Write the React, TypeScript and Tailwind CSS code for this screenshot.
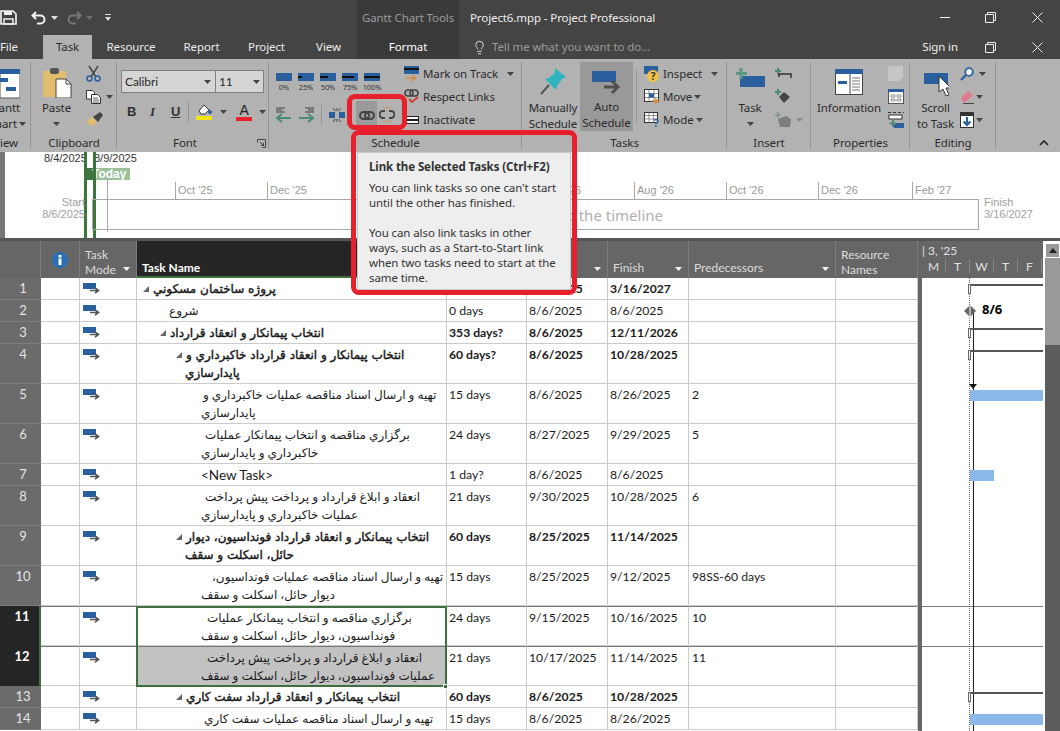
import React from "react";
import { Lightbulb } from "lucide-react";

const BLUE = "#2a5f9e";

function Caret({ c = "#444", cls = "" }: { c?: string; cls?: string }) {
  return (
    <svg width="7" height="4" viewBox="0 0 7 4" className={cls}>
      <polygon points="0,0 7,0 3.5,4" fill={c} />
    </svg>
  );
}

function AutoIcon() {
  return (
    <svg width="17" height="11" viewBox="0 0 17 11">
      <rect x="0" y="0" width="13" height="6" fill={BLUE} />
      <path d="M7 7.5h8M12 4.8l3.5 2.7L12 10.2" stroke="#555" strokeWidth="1.7" fill="none" />
    </svg>
  );
}

function Pct({ w, label }: { w: number; label: string }) {
  return (
    <div className="flex flex-col items-center w-[16px]">
      <svg width="16" height="8" viewBox="0 0 16 8">
        <rect width="16" height="8" fill={BLUE} />
        <rect y="3" width={w} height="2" fill="#111" />
      </svg>
      <span className="text-[7.5px] leading-[10px] mt-[1px] text-[#333] whitespace-nowrap">{label}</span>
    </div>
  );
}

function BigBtn({ icon, lines, caret, cls = "" }: { icon: React.ReactNode; lines: string[]; caret?: boolean; cls?: string }) {
  return (
    <div className={`flex flex-col items-center ${cls}`}>
      <div className="h-[41px] flex items-center justify-center">{icon}</div>
      {lines.map((l) => (
        <div key={l} className="h-[16px] leading-[16px] whitespace-nowrap">{l}</div>
      ))}
      {caret && <div className="h-[16px] flex items-center"><Caret /></div>}
    </div>
  );
}

function Group({ label, w, children, lblCls = "" }: { label: string; w: string; children: React.ReactNode; lblCls?: string }) {
  return (
    <div className={`relative shrink-0 flex flex-col ${w}`}>
      <div className="h-[75px] flex overflow-hidden">{children}</div>
      <div className={`h-[18px] leading-[18px] text-center whitespace-nowrap overflow-hidden ${lblCls}`}>{label}</div>
      <div className="absolute right-0 top-[3px] bottom-[3px] w-px bg-[#959595]" />
    </div>
  );
}

function Stack({ children, cls = "" }: { children: React.ReactNode; cls?: string }) {
  return <div className={`flex flex-col pt-[3px] ${cls}`}>{children}</div>;
}

function SRow({ children, cls = "" }: { children: React.ReactNode; cls?: string }) {
  return <div className={`h-[23px] flex items-center whitespace-nowrap ${cls}`}>{children}</div>;
}

type Line = { t: string; m: string };
type Row = { n: number; lines: Line[]; arrow?: string; bold?: boolean; dur: string; st: string; fin: string; pred?: string; dark?: boolean; sel?: boolean; h: string };

const rows: Row[] = [
  { n: 1, h: "h-[22px]", bold: true, arrow: "ml-[6px]", lines: [{ t: "پروژه ساختمان مسکوني", m: "" }], dur: "585 days?", st: "8/6/2025", fin: "3/16/2027" },
  { n: 2, h: "h-[22px]", lines: [{ t: "شروع", m: "ml-[32px]" }], dur: "0 days", st: "8/6/2025", fin: "8/6/2025" },
  { n: 3, h: "h-[22px]", bold: true, arrow: "ml-[23px]", lines: [{ t: "انتخاب پيمانکار و انعقاد قرارداد", m: "" }], dur: "353 days?", st: "8/6/2025", fin: "12/11/2026" },
  { n: 4, h: "h-[40px]", bold: true, arrow: "ml-[39px]", lines: [{ t: "انتخاب پيمانکار و انعقاد قرارداد خاکبرداري و", m: "" }, { t: "پايدارسازي", m: "ml-[48px]" }], dur: "60 days?", st: "8/6/2025", fin: "10/28/2025" },
  { n: 5, h: "h-[40px]", lines: [{ t: "تهيه و ارسال اسناد مناقصه عمليات خاکبرداري و", m: "ml-[66px]" }, { t: "پايدارسازي", m: "ml-[64px]" }], dur: "15 days", st: "8/6/2025", fin: "8/26/2025", pred: "2" },
  { n: 6, h: "h-[40px]", lines: [{ t: "برگزاري مناقصه و انتخاب پيمانکار عمليات", m: "ml-[68px]" }, { t: "خاکبرداري و پايدارسازي", m: "ml-[64px]" }], dur: "24 days", st: "8/27/2025", fin: "9/29/2025", pred: "5" },
  { n: 7, h: "h-[22px]", lines: [{ t: "<New Task>", m: "ml-[64px]" }], dur: "1 day?", st: "8/6/2025", fin: "8/6/2025" },
  { n: 8, h: "h-[40px]", lines: [{ t: "انعقاد و ابلاغ قرارداد و پرداخت پيش پرداخت", m: "ml-[68px]" }, { t: "عمليات خاکبرداري و پايدارسازي", m: "ml-[64px]" }], dur: "21 days", st: "9/30/2025", fin: "10/28/2025", pred: "6" },
  { n: 9, h: "h-[40px]", bold: true, arrow: "ml-[39px]", lines: [{ t: "انتخاب پيمانکار و انعقاد قرارداد فونداسيون، ديوار", m: "" }, { t: "حائل، اسکلت و سقف", m: "ml-[48px]" }], dur: "60 days", st: "8/25/2025", fin: "11/14/2025" },
  { n: 10, h: "h-[40px]", lines: [{ t: "تهيه و ارسال اسناد مناقصه عمليات فونداسيون،", m: "ml-[75px]" }, { t: "ديوار حائل، اسکلت و سقف", m: "ml-[64px]" }], dur: "15 days", st: "8/25/2025", fin: "9/12/2025", pred: "98SS-60 days" },
  { n: 11, h: "h-[40px]", dark: true, lines: [{ t: "برگزاري مناقصه و انتخاب پيمانکار عمليات", m: "ml-[70px]" }, { t: "فونداسيون، ديوار حائل، اسکلت و سقف", m: "ml-[64px]" }], dur: "24 days", st: "9/15/2025", fin: "10/16/2025", pred: "10" },
  { n: 12, h: "h-[40px]", dark: true, sel: true, lines: [{ t: "انعقاد و ابلاغ قرارداد و پرداخت پيش پرداخت", m: "ml-[70px]" }, { t: "عمليات فونداسيون، ديوار حائل، اسکلت و سقف", m: "ml-[64px]" }], dur: "21 days", st: "10/17/2025", fin: "11/14/2025", pred: "11" },
  { n: 13, h: "h-[22px]", bold: true, arrow: "ml-[39px]", lines: [{ t: "انتخاب پيمانکار و انعقاد قرارداد سفت کاري", m: "" }], dur: "60 days", st: "8/6/2025", fin: "10/28/2025" },
  { n: 14, h: "h-[22px]", lines: [{ t: "تهيه و ارسال اسناد مناقصه عمليات سفت کاري", m: "ml-[67px]" }], dur: "15 days", st: "8/6/2025", fin: "8/26/2025" },
];

function TableRow({ r }: { r: Row }) {
  const topLine = r.dark ? "border-t border-t-[#777]" : "";
  const cell = `border-r border-b border-[#cbcbcb] ${topLine}`;
  const data = `${cell} pl-[2px] pt-[2px] leading-[18px] whitespace-nowrap overflow-hidden ${r.bold ? "font-bold" : ""}`;
  return (
    <div className={`flex text-[12.2px] text-[#1a1a1a] ${r.h}`}>
      <div className={`w-[41px] shrink-0 text-center pl-[5px] pt-[1px] leading-[18px] text-[13px] ${r.dark ? "bg-[#252525] text-white font-bold border-r-2 border-[#3f6f3f]" : "bg-[#6b6b6b] text-[#e4e4e4] border-b border-[#7e7e7e]"}`}>
        {r.n}
      </div>
      <div className={`w-[39px] shrink-0 ${cell}`} />
      <div className={`w-[57px] shrink-0 pl-[3px] pt-[5px] ${cell}`}>
        <AutoIcon />
      </div>
      <div className={`w-[310px] shrink-0 overflow-hidden pt-[2px] leading-[18px] ${cell} ${r.sel ? "bg-[#c2c2c2]" : ""}`}>
        {r.lines.map((l, i) => (
          <div key={i} className={`flex items-center gap-[4px] whitespace-nowrap h-[18px] ${i === 0 && r.arrow ? r.arrow : l.m}`}>
            {i === 0 && r.arrow && (
              <svg width="6" height="6" viewBox="0 0 6 6">
                <polygon points="6,0 6,6 0,6" fill="#666" />
              </svg>
            )}
            {l.t.startsWith("<") ? (
              <div className="w-fit text-[13.5px]">{l.t}</div>
            ) : (
              <div dir="rtl" className={`w-fit text-[12px] ${r.bold ? "font-['DejaVu_Sans',sans-serif] [-webkit-text-stroke:0.4px_#111]" : "font-['Lato','DejaVu_Sans',sans-serif]"}`}>
                {l.t}
              </div>
            )}
          </div>
        ))}
      </div>
      <div className={`w-[80px] shrink-0 ${data}`}>{r.dur}</div>
      <div className={`w-[81px] shrink-0 ${data}`}>{r.st}</div>
      <div className={`w-[81px] shrink-0 ${data}`}>{r.fin}</div>
      <div className={`w-[147px] shrink-0 pl-[3px] ${data}`}>{r.pred}</div>
      <div className={`w-[82px] shrink-0 ${data}`} />
    </div>
  );
}

function HCell({ w, lines, caret, dark }: { w: string; lines: string[]; caret?: boolean; dark?: boolean }) {
  const pb = dark ? "pb-[1px]" : lines.length > 1 ? "pb-[1px]" : "pb-[3px]";
  return (
    <div className={`relative shrink-0 ${w} h-full flex flex-col justify-end pl-[5px] ${pb} leading-[15px] ${dark ? "bg-[#252525] border-b-2 border-[#3f6f3f] text-white font-bold" : "border-r border-[#7c7c7c] text-[#dddddd]"}`}>
      {lines.map((l) => (
        <div key={l} className="whitespace-nowrap">{l}</div>
      ))}
      {caret && <Caret c="#f0f0f0" cls="absolute right-[6px] bottom-[7px]" />}
    </div>
  );
}

export default function App() {
  return (
    <div className="w-[1060px] h-[731px] overflow-hidden relative bg-white text-[11.5px] tracking-[-0.1px] font-['Noto_Sans',sans-serif] text-[#2b2b2b]">
      {/* Title row */}
      <div className="h-[35px] bg-[#444444] flex items-center text-[#e6e6e6]">
        <div className="w-[357px] flex items-center shrink-0">
          <svg width="17" height="15" viewBox="0 0 17 15" className="ml-0">
            <path d="M1 1h12l3 3v10H1z" fill="none" stroke="#eee" strokeWidth="1.7" />
            <rect x="4" y="1" width="8" height="4" fill="#eee" />
            <rect x="4" y="9" width="9" height="5" fill="none" stroke="#eee" strokeWidth="1.5" />
          </svg>
          <svg width="16" height="14" viewBox="0 0 16 14" className="ml-[14px]">
            <path d="M5 1L1.5 4.5 5 8M2 4.5h7.5a3.6 3.6 0 0 1 0 8H6" fill="none" stroke="#f0f0f0" strokeWidth="2" />
          </svg>
          <Caret c="#ddd" cls="ml-[4px]" />
          <svg width="16" height="14" viewBox="0 0 16 14" className="ml-[8px]">
            <path d="M11 1l3.5 3.5L11 8M14 4.500H6.500a3.600 3.600 0 0 0 0 8H10" fill="none" stroke="#777" strokeWidth="2" />
          </svg>
          <Caret c="#6f6f6f" cls="ml-[4px]" />
          <svg width="7" height="9" viewBox="0 0 7 9" className="ml-[12px] mt-[2px]">
            <rect y="0" width="6" height="1" fill="#ddd" />
            <polygon points="0,3 6,3 3,7" fill="#ddd" />
          </svg>
        </div>
        <div className="w-[102px] h-full bg-[#3a3a3a] shrink-0 flex items-center justify-center text-[#9c9c9c] text-[11.5px]">Gantt Chart Tools</div>
        <div className="pl-[11px] flex-1 whitespace-nowrap text-[#efefef]">Project6.mpp - Project Professional</div>
        <svg width="10" height="2" viewBox="0 0 10 2" className="mr-[35px]"><rect width="10" height="1" fill="#eee" /></svg>
        <svg width="11" height="11" viewBox="0 0 11 11" className="mr-[36px]">
          <path d="M2.500 2.500V.5h8v8h-2M.5 2.500h8v8h-8z" fill="none" stroke="#eee" />
        </svg>
        <svg width="11" height="11" viewBox="0 0 11 11" className="mr-[17px]">
          <path d="M.5.5l10 10M10.500.5l-10 10" stroke="#eee" />
        </svg>
      </div>
      {/* Tabs row */}
      <div className="h-[24px] bg-[#444444] flex items-stretch text-[#ececec]">
        <div className="w-[43px] shrink-0 flex items-center">File</div>
        <div className="w-[49px] shrink-0 bg-[#b2b2b2] text-[#2b2b2b] flex items-center justify-center">Task</div>
        <div className="w-[78px] shrink-0 flex items-center justify-center">Resource</div>
        <div className="w-[63px] shrink-0 flex items-center justify-center">Report</div>
        <div className="w-[67px] shrink-0 flex items-center justify-center">Project</div>
        <div className="w-[57px] shrink-0 flex items-center justify-center">View</div>
        <div className="w-[102px] shrink-0 bg-[#3a3a3a] flex items-center justify-center text-white">Format</div>
        <div className="flex-1 flex items-center pl-[13px] text-[#9a9a9a] whitespace-nowrap">
          <Lightbulb size={15} strokeWidth={1.4} color="#e8e8e8" />
          <span className="ml-[5px]">Tell me what you want to do...</span>
        </div>
        <div className="flex items-center">Sign in</div>
        <svg width="11" height="11" viewBox="0 0 11 11" className="self-center ml-[27px] mr-[36px]">
          <path d="M2.500 2.500V.5h8v8h-2M.5 2.500h8v8h-8z" fill="none" stroke="#eee" />
        </svg>
        <svg width="11" height="11" viewBox="0 0 11 11" className="self-center mr-[17px]">
          <path d="M.5.5l10 10M10.500.5l-10 10" stroke="#eee" />
        </svg>
      </div>

      {/* Ribbon */}
      <div className="h-[93px] bg-[#b2b2b2] flex relative">
        <Group label="View" w="w-[31px]" lblCls="text-right -ml-[10px] mr-[13px]">
          <div className="flex flex-col items-end w-full pr-[11px]">
            <div className="h-[41px] flex items-center pt-[9px]">
              <svg width="20" height="30" viewBox="0 0 20 30">
                <rect width="20" height="29" fill="#fff" stroke="#555" />
                <rect width="20" height="5" fill={BLUE} />
                <rect x="0" y="9" width="8" height="4" fill={BLUE} />
                <rect x="6" y="18" width="10" height="4" fill={BLUE} />
              </svg>
            </div>
            <div className="h-[16px] leading-[16px] whitespace-nowrap">Gantt</div>
            <div className="h-[16px] leading-[16px] whitespace-nowrap flex items-center gap-[2px] -mr-[6px]">Chart<Caret /></div>
          </div>
        </Group>

        <Group label="Clipboard" w="w-[86px]">
          <BigBtn
            cls="ml-[9px] w-[33px]"
            lines={["Paste"]}
            caret
            icon={
              <svg width="30" height="30" viewBox="0 0 30 30" className="mt-[6px]">
                <rect x="1" y="3" width="23" height="26" rx="1" fill="#e3bd6e" />
                <rect x="8" y="0" width="9" height="6" rx="2" fill="#555" />
                <path d="M14 11h10l5 5v14H14z" fill="#fff" stroke="#444" />
                <path d="M24 11v5h5" fill="none" stroke="#444" />
              </svg>
            }
          />
          <Stack cls="ml-[13px]">
            <SRow>
              <svg width="15" height="17" viewBox="0 0 15 17">
                <path d="M3 1l7 11M12 1L5 12" stroke="#444" strokeWidth="1.4" />
                <circle cx="3.500" cy="13.500" r="2.500" fill="none" stroke={BLUE} strokeWidth="1.500" />
                <circle cx="11.500" cy="13.500" r="2.500" fill="none" stroke={BLUE} strokeWidth="1.500" />
              </svg>
            </SRow>
            <SRow>
              <svg width="15" height="14" viewBox="0 0 15 14">
                <path d="M.5.5h6l2 2V9H.5z" fill="#fff" stroke="#333" />
                <path d="M5.500 4.500h6l3 3v6h-9z" fill="#fff" stroke="#333" />
                <path d="M7 8h5M7 10h6M7 12h6" stroke="#333" strokeWidth=".8" />
              </svg>
              <Caret cls="ml-[5px]" />
            </SRow>
            <SRow>
              <svg width="17" height="15" viewBox="0 0 17 15">
                <path d="M0 10l6-5 5 5-4 4z" fill="#e3bd6e" />
                <path d="M7 5l7-5 3 3-5 7z" fill="#444" />
              </svg>
            </SRow>
          </Stack>
        </Group>

        <Group label="Font" w="w-[152px]" lblCls="pr-[16px]">
          <div className="pl-[4px] pt-[11px] flex flex-col">
            <div className="flex h-[23px] text-[12px]">
              <div className="w-[95px] bg-[#d5d5d5] border border-[#808080] flex items-center justify-between pl-[3px] pr-[4px] font-['Lato',sans-serif]">
                Calibri<Caret />
              </div>
              <div className="w-[48px] bg-[#d5d5d5] border border-l-0 border-[#808080] flex items-center justify-between pl-[3px] pr-[3px] font-['Lato',sans-serif]">
                11<Caret />
              </div>
            </div>
            <div className="flex items-center h-[22px] mt-[8px] text-[13px] text-[#333]">
              <span className="ml-[6px] w-[22px] font-bold font-['Liberation_Sans',sans-serif]">B</span>
              <span className="w-[22px] pl-[1px] italic font-['Liberation_Serif',serif] font-bold">I</span>
              <span className="w-[17px] underline font-bold font-['Liberation_Sans',sans-serif]">U</span>
              <div className="w-px h-[20px] bg-[#959595]" />
              <svg width="17" height="18" viewBox="0 0 17 18" className="ml-[7px]">
                <path d="M3 8l5-6 5 5-4 4H5z" fill="#fff" stroke="#333" />
                <circle cx="14" cy="9" r="2" fill={BLUE} />
                <rect y="13" width="16" height="4" fill="#f2e317" />
              </svg>
              <Caret cls="ml-[7px]" />
              <div className="ml-[9px] flex flex-col items-center w-[16px] leading-[13px]">
                <span className="font-['Liberation_Sans',sans-serif] text-[14px] text-[#222]">A</span>
                <div className="w-[16px] h-[4px] bg-[#e8202c]" />
              </div>
              <Caret cls="ml-[7px]" />
            </div>
          </div>
          <svg width="9" height="9" viewBox="0 0 9 9" className="absolute right-[3px] bottom-[4px]">
            <path d="M.5 3.500V.5h8v8h-3M3 3l3 3" fill="none" stroke="#444" />
            <polygon points="7,7 3.500,7 7,3.500" fill="#444" />
          </svg>
        </Group>

        <Group label="Schedule" w="w-[253px]">
          <div className="pl-[7px] w-[133px] shrink-0 flex flex-col">
            <div className="flex gap-[6px] pt-[14px] h-[42px]">
              <Pct w={0} label="0%" />
              <Pct w={4} label="25%" />
              <Pct w={8} label="50%" />
              <Pct w={12} label="75%" />
              <Pct w={16} label="100%" />
            </div>
            <div className="flex items-center h-[28px]">
              <svg width="16" height="16" viewBox="0 0 16 16">
                <path d="M0 1h9M0 3h6M0 5h9" stroke="#444" />
                <path d="M1 11h14M6 7l-5 4 5 4" fill="none" stroke="#4c8a78" strokeWidth="2" />
              </svg>
              <svg width="16" height="16" viewBox="0 0 16 16" className="ml-[6px]">
                <path d="M7 1h9M10 3h6M7 5h9" stroke="#444" />
                <path d="M1 11h14M10 7l5 4-5 4" fill="none" stroke="#4c8a78" strokeWidth="2" />
              </svg>
              <div className="w-px h-[20px] bg-[#959595] ml-[7px]" />
              <svg width="16" height="14" viewBox="0 0 16 14" className="ml-[7px]">
                <rect y="4" width="6" height="6" fill={BLUE} />
                <rect x="10" y="4" width="6" height="6" fill={BLUE} />
                <path d="M4 0l2.500 3M12 0L9.500 3M4 14l2.500-3M12 14L9.500 11M8 0v3M8 11v3" stroke="#444" />
              </svg>
              <div className="ml-[11px] w-[21px] h-[28px] bg-[#9a9a9a] flex items-center justify-center shrink-0">
                <svg width="16" height="9" viewBox="0 0 16 9">
                  <rect x="1" y="1" width="9" height="7" rx="3.500" fill="none" stroke="#444" strokeWidth="2" />
                  <rect x="6" y="1" width="9" height="7" rx="3.500" fill="none" stroke="#444" strokeWidth="2" />
                </svg>
              </div>
              <div className="w-[20px] h-[28px] flex items-center justify-center shrink-0">
                <svg width="16" height="18" viewBox="0 0 16 18">
                  <path d="M6 5H4a3.500 3.500 0 0 0 0 7h2M10 5h2a3.500 3.500 0 0 1 0 7h-2" fill="none" stroke="#444" strokeWidth="2" />
                  <path d="M8 0v3M4 1l2 2M12 1l-2 2M8 14v3M4 16l2-2M12 16l-2-2" stroke="#d98a3a" />
                </svg>
              </div>
            </div>
          </div>
          <Stack cls="ml-[2px]">
            <SRow>
              <svg width="15" height="16" viewBox="0 0 15 16" className="mr-[4px]">
                <rect width="15" height="8" fill={BLUE} />
                <rect y="2" width="15" height="2" fill="#111" />
                <path d="M2 12h9M8 9l3.500 3L8 15" fill="none" stroke="#d98a3a" strokeWidth="1.500" />
              </svg>
              Mark on Track<Caret cls="ml-[9px]" />
            </SRow>
            <SRow>
              <svg width="15" height="15" viewBox="0 0 15 15" className="mr-[4px]">
                <rect x="1" y="1" width="8" height="6" rx="3" fill="none" stroke="#444" strokeWidth="1.600" />
                <rect x="6" y="1" width="8" height="6" rx="3" fill="none" stroke="#444" strokeWidth="1.600" />
                <path d="M5 10l3 3 6-5" fill="none" stroke="#c8432f" strokeWidth="1.800" />
              </svg>
              Respect Links
            </SRow>
            <SRow>
              <svg width="15" height="8" viewBox="0 0 15 8" className="mr-[4px]">
                <rect x=".5" y=".5" width="14" height="3" fill="#fff" stroke="#222" />
                <rect x=".5" y="4.500" width="14" height="3" fill="#fff" stroke="#222" />
              </svg>
              Inactivate
            </SRow>
          </Stack>
        </Group>

        <Group label="Tasks" w="w-[205px]">
          <BigBtn
            cls="ml-[6px] w-[50px]"
            lines={["Manually", "Schedule"]}
            icon={
              <svg width="27" height="27" viewBox="0 0 27 27" className="mt-[3px]">
                <path d="M15 0l11 9-4 2-5 7-1 4-11-11 4-1 6-5z" fill="#2fb5bf" />
                <path d="M9 17l-8 9" stroke="#555" strokeWidth="2" />
              </svg>
            }
          />
          <div className="ml-[2px] mt-[3px] h-[69px] w-[53px] bg-[#999999] flex flex-col items-center">
            <div className="h-[38px] flex items-center">
              <svg width="28" height="26" viewBox="0 0 28 26" className="mt-[6px] mr-[1px]">
                <rect width="24" height="11" fill={BLUE} />
                <path d="M12 16h14M20 10l6 6-6 6" fill="none" stroke="#505050" strokeWidth="3" />
              </svg>
            </div>
            <div className="h-[16px] leading-[16px]">Auto</div>
            <div className="h-[16px] leading-[16px]">Schedule</div>
          </div>
          <div className="w-px h-[55px] mt-[10px] ml-[3px] bg-[#959595]" />
          <Stack cls="ml-[7px]">
            <SRow>
              <svg width="16" height="16" viewBox="0 0 16 16" className="mr-[3px]">
                <rect width="14" height="8" fill={BLUE} />
                <circle cx="9" cy="10" r="6" fill="#f2c14a" />
                <text x="9" y="14" fontSize="10" fontWeight="700" textAnchor="middle" fill="#333">?</text>
              </svg>
              Inspect<Caret cls="ml-[9px]" />
            </SRow>
            <SRow>
              <svg width="16" height="15" viewBox="0 0 16 15" className="mr-[3px]">
                <rect x=".5" y=".5" width="14" height="12" fill="#fff" stroke="#333" />
                <path d="M.5 4.500h14M.5 8.500h14M5 .5v12M10 .5v12" stroke="#666" strokeWidth=".7" />
                <rect x="5" y="4.500" width="5" height="4" fill={BLUE} />
                <path d="M8 12h6M11 9.500l3 2.500-3 2.500" fill="none" stroke="#d98a3a" strokeWidth="1.500" />
              </svg>
              Move<Caret cls="ml-[2px]" />
            </SRow>
            <SRow>
              <svg width="16" height="15" viewBox="0 0 16 15" className="mr-[3px]">
                <rect x=".5" y=".5" width="13" height="10" fill="#fff" stroke="#333" />
                <path d="M.5 3.500h13M.5 7h13M5 .5v10M9.500.5v10" stroke="#666" strokeWidth=".7" />
                <text x="12" y="15" fontSize="11" fontWeight="700" textAnchor="middle" fill={BLUE}>?</text>
              </svg>
              Mode<Caret cls="ml-[2px]" />
            </SRow>
          </Stack>
        </Group>

        <Group label="Insert" w="w-[84px]">
          <BigBtn
            cls="ml-[9px] w-[28px]"
            lines={["Task"]}
            caret
            icon={
              <svg width="29" height="19" viewBox="0 0 29 19" className="mb-[4px]">
                <rect x="4" y="8" width="25" height="11" fill={BLUE} />
                <path d="M5 0v11M0 5.500h11" stroke="#5b9a82" strokeWidth="3" />
              </svg>
            }
          />
          <Stack cls="ml-[11px]">
            <SRow>
              <svg width="17" height="11" viewBox="0 0 17 11">
                <path d="M3 0v6M0 3h6" stroke="#4c8a78" strokeWidth="2" />
                <path d="M3 6h13v4M4 6v3" fill="none" stroke="#333" strokeWidth="1.500" />
              </svg>
            </SRow>
            <SRow>
              <svg width="17" height="15" viewBox="0 0 17 15">
                <path d="M3 0v6M0 3h6" stroke="#4c8a78" strokeWidth="2" />
                <path d="M9 3l6 5-6 6-5-6z" fill="#444" />
              </svg>
            </SRow>
            <SRow>
              <svg width="17" height="15" viewBox="0 0 17 15">
                <path d="M3 0v6M0 3h6" stroke="#8a9a92" strokeWidth="2" />
                <path d="M3 7l8-3 5 3-1 8H5z" fill="#7e7e7e" />
              </svg>
              <Caret c="#8a8a8a" cls="ml-[4px]" />
            </SRow>
          </Stack>
        </Group>

        <Group label="Properties" w="w-[99px]">
          <BigBtn
            cls="ml-[6px] w-[64px]"
            lines={["Information"]}
            icon={
              <svg width="28" height="26" viewBox="0 0 28 26" className="mt-[4px]">
                <rect x=".5" y=".5" width="27" height="25" fill="#fff" stroke="#444" />
                <rect width="28" height="5" fill={BLUE} />
                <rect x="3" y="12" width="9" height="3" fill={BLUE} />
                <path d="M15 5v20" stroke="#444" />
                <path d="M17 9h8M17 12h8M17 15h8M17 18h8M17 21h8" stroke="#777" />
              </svg>
            }
          />
          <Stack cls="ml-[7px]">
            <SRow>
              <svg width="15" height="15" viewBox="0 0 15 15">
                <path d="M0 0h15v11l-4 4H0z" fill="#c6c6c6" />
              </svg>
            </SRow>
            <SRow>
              <svg width="16" height="15" viewBox="0 0 16 15">
                <rect x=".5" y=".5" width="15" height="14" fill="#fff" stroke="#555" />
                <rect width="16" height="3" fill={BLUE} />
                <path d="M3 6h4v2H3zM9 6h4v2H9zM3 10h4v2H3zM9 10h4v2H9z" fill="none" stroke="#666" strokeWidth=".7" />
              </svg>
            </SRow>
            <SRow>
              <svg width="16" height="16" viewBox="0 0 16 16">
                <path d="M0 .5h16" stroke="#333" strokeDasharray="3 2" />
                <rect x="1" y="3" width="13" height="4" fill="#fff" stroke="#333" />
                <rect x="6" y="11" width="10" height="5" fill={BLUE} />
                <path d="M5 8v7M1.500 11.500h7" stroke="#4c8a78" strokeWidth="2" />
              </svg>
            </SRow>
          </Stack>
        </Group>

        <Group label="Editing" w="w-[86px]">
          <BigBtn
            cls="ml-[7px] w-[37px]"
            lines={["Scroll", "to Task"]}
            icon={
              <svg width="27" height="26" viewBox="0 0 27 26" className="mt-[8px]">
                <rect x="2" y="2" width="24" height="11" fill={BLUE} />
                <path d="M17 5v16l4-3 3 7 3-1-3-7h5z" fill="#fff" stroke="#333" />
              </svg>
            }
          />
          <Stack cls="ml-[6px]">
            <SRow>
              <svg width="14" height="14" viewBox="0 0 14 14">
                <circle cx="9" cy="5" r="3.800" fill="#fff" stroke={BLUE} strokeWidth="1.800" />
                <path d="M6 8l-5 5" stroke={BLUE} strokeWidth="2.200" />
              </svg>
              <Caret cls="ml-[5px]" />
            </SRow>
            <SRow>
              <svg width="14" height="14" viewBox="0 0 14 14">
                <path d="M1 8l7-7 5 4-7 7H3z" fill="#e07c8d" />
                <path d="M3 13.500h11" stroke="#444" />
              </svg>
              <Caret cls="ml-[2px]" />
            </SRow>
            <SRow>
              <svg width="14" height="16" viewBox="0 0 14 16">
                <rect x=".5" y=".5" width="13" height="15" fill="#fff" stroke="#333" />
                <rect width="14" height="4" fill="#333" />
                <path d="M7 5v8M3.500 9.500L7 13l3.500-3.500" fill="none" stroke={BLUE} strokeWidth="2.200" />
              </svg>
              <Caret cls="ml-[2px]" />
            </SRow>
          </Stack>
        </Group>

        <svg width="10" height="6" viewBox="0 0 10 6" className="absolute right-[11px] bottom-[6px]">
          <path d="M1 5l4-4 4 4" fill="none" stroke="#222" strokeWidth="1.600" />
        </svg>
      </div>

      {/* Timeline: free canvas */}
      <div className="h-[86px] relative bg-white font-['Liberation_Sans',sans-serif] text-[11px] tracking-normal border-l-[5px] border-[#777]">
        <span className="absolute left-[39px] top-0 text-[#333] leading-[13px]">8/4/2025</span>
        <span className="absolute left-[89px] top-0 text-[#333] leading-[13px]">8/9/2025</span>
        <div className="absolute left-[80px] top-[16px] w-[9px] h-[12px] bg-[#3c763c]" />
        <div className="absolute left-[89px] top-[16px] w-[36px] h-[12px] bg-[#9cc09c]" />
        <div className="absolute left-[87px] top-[16px] text-white font-bold text-[12px] leading-[12px]">Today</div>
        <div className="absolute left-[79px] top-0 bottom-0 w-[3px] bg-[#3c763c]" />
        <div className="absolute left-[88px] top-0 bottom-0 w-[3px] bg-[#3c763c]" />
        <div className="absolute left-[102px] top-[28px] h-[52px] w-px bg-[#a8a8a8]" />
        {[
          { x: "left-[170px]", t: "Oct '25" },
          { x: "left-[262px]", t: "Dec '25" },
          { x: "left-[538px]", t: "Jun '26" },
          { x: "left-[629px]", t: "Aug '26" },
          { x: "left-[721px]", t: "Oct '26" },
          { x: "left-[813px]", t: "Dec '26" },
          { x: "left-[907px]", t: "Feb '27" },
        ].map((m) => (
          <div key={m.t} className={`absolute ${m.x} top-[30px] h-[17px] border-l border-[#a8a8a8] pl-[2px] text-[#999] leading-[16px] whitespace-nowrap`}>
            {m.t}
          </div>
        ))}
        <div className="absolute left-[87px] top-[47px] w-[887px] h-[31px] border border-[#a8a8a8]" />
        <div className="absolute left-[10px] top-[44px] w-[70px] text-right text-[#a0a0a0] leading-[12px]">
          Start
          <br />
          8/6/2025
        </div>
        <div className="absolute left-[979px] top-[44px] text-[#a0a0a0] leading-[12px] whitespace-nowrap">
          Finish
          <br />
          3/16/2027
        </div>
        <div className="absolute right-[397px] top-[53px] text-[15px] leading-[20px] text-[#b0b0b0] font-['Noto_Sans',sans-serif] whitespace-nowrap">
          Add tasks with dates to the timeline
        </div>
      </div>
      <div className="h-[3px] bg-[#555]" />

      {/* Table + chart */}
      <div className="flex tracking-normal">
        <div className="w-[918px] shrink-0">
          <div className="h-[37px] bg-[#666666] flex text-[12px] font-['Lato',sans-serif]">
            <HCell w="w-[41px]" lines={[]} />
            <div className="w-[39px] shrink-0 border-r border-[#7c7c7c] flex items-center justify-center">
              <svg width="16" height="16" viewBox="0 0 16 16">
                <circle cx="8" cy="8" r="8" fill="#2a6eb5" />
                <rect x="6.500" y="6.500" width="3" height="6.500" fill="#fff" />
                <rect x="6.500" y="3" width="3" height="2.500" fill="#fff" />
              </svg>
            </div>
            <HCell w="w-[57px]" lines={["Task", "Mode"]} caret />
            <HCell w="w-[310px]" lines={["Task Name"]} dark />
            <HCell w="w-[80px]" lines={["Duration"]} caret />
            <HCell w="w-[81px]" lines={["Start"]} caret />
            <HCell w="w-[81px]" lines={["Finish"]} caret />
            <HCell w="w-[147px]" lines={["Predecessors"]} caret />
            <HCell w="w-[82px]" lines={["Resource", "Names"]} />
          </div>
          <div className="relative font-['Lato',sans-serif]">
            {rows.map((r) => (
              <TableRow key={r.n} r={r} />
            ))}
            <div className="absolute left-[136px] top-[328px] w-[311px] h-[81px] border-2 border-[#3f6f3f]" />
            <div className="absolute left-[443px] top-[406px] w-[5px] h-[5px] bg-[#3f6f3f] border border-white" />
          </div>
        </div>
        <div className="w-[4px] shrink-0 bg-[#666]" />
        <div className="w-[121px] shrink-0">
          <div className="h-[37px] bg-[#666666] text-[#e0e0e0] font-['Lato',sans-serif] text-[12px]">
            <div className="h-[18px] leading-[20px] whitespace-nowrap">| 3, '25</div>
            <div className="flex h-[19px] leading-[16px] text-center">
              {["M", "T", "W", "T", "F"].map((d, i) => (
                <div key={i} className="w-[24px] border-r border-[#858585] h-[14px]">{d}</div>
              ))}
            </div>
          </div>
          {/* Gantt drawing: free canvas */}
          <div className="relative h-[453px] bg-white overflow-hidden">
            <div className="absolute left-0 right-0 top-[328px] h-px bg-[#777]" />
            <div className="absolute left-0 right-0 top-[368px] h-px bg-[#777]" />
            <div className="absolute left-[47px] top-0 bottom-0 border-l border-dotted border-[#666]" />
            <div className="absolute left-[51px] top-[34px] bottom-0 w-px bg-[#222]" />
            {[{ t: "top-[6px]" }, { t: "top-[50px]" }, { t: "top-[72px]" }, { t: "top-[414px]" }].map((s) => (
              <div key={s.t} className={`absolute left-[46px] ${s.t} w-[75px] h-[10px]`}>
                <div className="absolute left-[2px] right-0 top-0 h-[2px] bg-[#555]" />
                <div className="absolute left-0 top-0 w-[3px] h-[10px] border border-[#666] bg-white" />
              </div>
            ))}
            <svg width="12" height="12" viewBox="0 0 12 12" className="absolute left-[42px] top-[27px]">
              <polygon points="6,0 12,6 6,12 0,6" fill="#666" />
              <path d="M6 0v12" stroke="#fff" />
            </svg>
            <span className="absolute left-[60px] top-[22px] text-[13px] font-bold text-black leading-[18px] font-['Noto_Sans',sans-serif]">8/6</span>
            <svg width="8" height="5" viewBox="0 0 8 5" className="absolute left-[47px] top-[106px]">
              <polygon points="0,0 8,0 4,5" fill="#111" />
            </svg>
            <div className="absolute left-[48px] right-0 top-[112px] h-[11px] bg-[#8ab8e8]" />
            <div className="absolute left-[48px] w-[24px] top-[192px] h-[11px] bg-[#8ab8e8]" />
            <div className="absolute left-[48px] right-0 top-[436px] h-[11px] bg-[#8ab8e8]" />
          </div>
        </div>
        <div className="flex-1 bg-[#5c5c5c] border-l-2 border-white relative">
          <div className="h-[2px] bg-white" />
          <div className="h-[15px] bg-[#999] border border-white flex items-center justify-center">
            <svg width="8" height="5" viewBox="0 0 8 5"><polygon points="4,0 8,5 0,5" fill="#222" /></svg>
          </div>
          <div className="h-[87px] bg-[#999]" />
        </div>
      </div>

      {/* Tooltip and annotations */}
      <div className="absolute left-[347px] top-[94px] w-[60px] h-[36px] border-[5px] border-[#e8202c] rounded-[8px]" />
      <div className="absolute left-[351px] top-[130px] w-[226px] h-[165px] border-[5px] border-[#e8202c] rounded-[8px]" />
      <div className="absolute left-[357px] top-[152px] w-[214px] h-[138px] bg-[#eeeeee] border border-[#c8c8c8] pl-[11px] pt-[6px] leading-[15px] text-[#333]">
        <div className="font-bold mb-[6px] whitespace-nowrap">Link the Selected Tasks (Ctrl+F2)</div>
        <div>You can link tasks so one can't start</div>
        <div>until the other has finished.</div>
        <div className="mt-[15px]">You can also link tasks in other</div>
        <div>ways, such as a Start-to-Start link</div>
        <div>when two tasks need to start at the</div>
        <div>same time.</div>
      </div>
    </div>
  );
}
